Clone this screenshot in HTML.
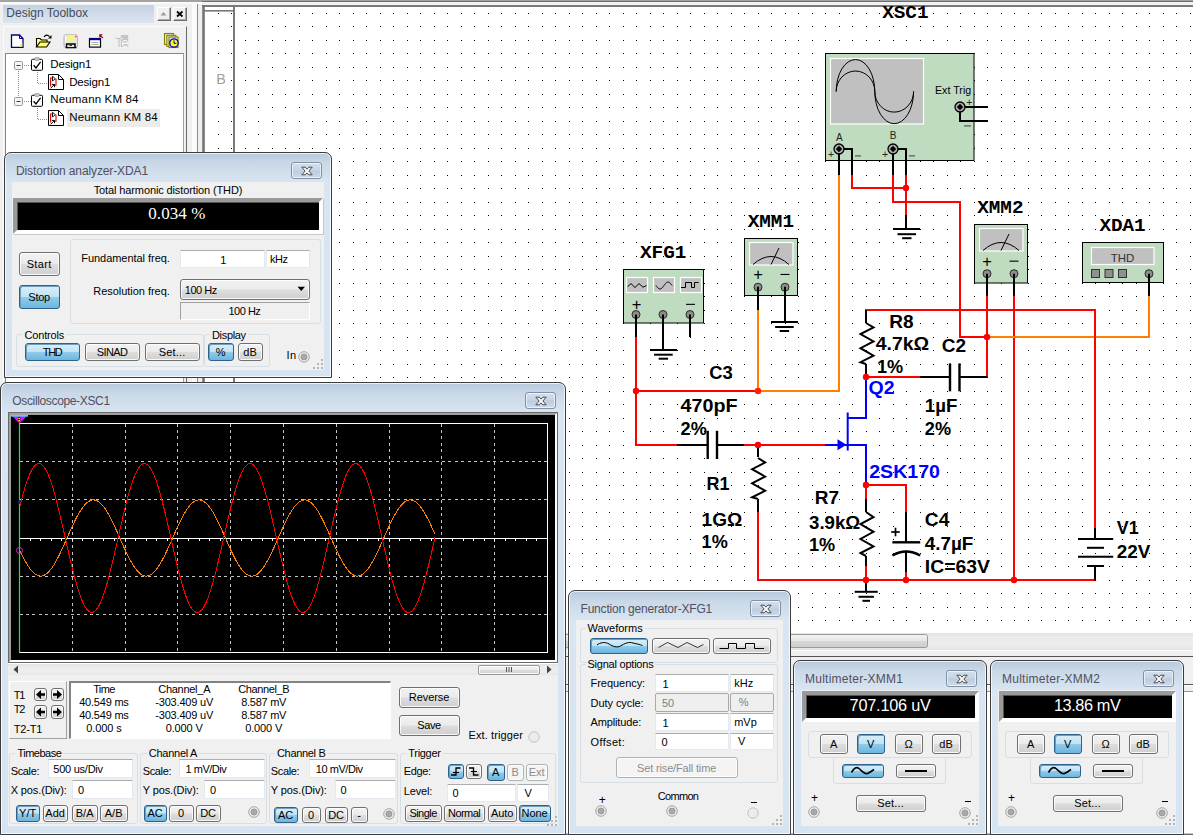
<!DOCTYPE html>
<html><head><meta charset="utf-8"><title>Multisim</title><style>
html,body{margin:0;padding:0;}
body{width:1193px;height:835px;overflow:hidden;position:relative;background:#fff;font-family:"Liberation Sans",sans-serif;font-size:11px;color:#000;}
div,svg{position:absolute;box-sizing:border-box;}
.abs{position:absolute;}
.t{white-space:nowrap;line-height:1;}
.t span{position:static;}
.w{border:1px solid #3c3c3c;border-radius:7px 7px 0 0;background:linear-gradient(#b8c9dc 0px,#c9d8e8 10px,#d9e5f2 30px,#d6e3f1 100%);box-shadow:inset 0 0 0 1px rgba(255,255,255,.75);}
.wc{background:#f0f0f0;}
.cl{border:1px solid #8290a5;border-radius:3px;background:linear-gradient(#d3dfec,#c6d4e5 48%,#bccbdf 52%,#cfdbea);box-shadow:inset 0 0 0 1px rgba(255,255,255,.6);}
.b{border:1px solid #707070;border-radius:3px;background:linear-gradient(#f2f2f2,#ebebeb 48%,#dddddd 52%,#cfcfcf);box-shadow:inset 0 0 0 1px rgba(255,255,255,.85);}
.ba{border-color:#2c628b;background:linear-gradient(#daeef9,#bfe3f6 48%,#8fcbeb 52%,#6db6dd);box-shadow:inset 1px 1px 0 0 #6f9fbd;}
.bd{border-color:#adb2b5;background:#f4f4f4;box-shadow:inset 0 0 0 1px #fcfcfc;}
.in{background:#fff;border:1px solid #e3e9ef;border-top-color:#abadb3;border-radius:1px;}
.ind{background:#efefef;border:1px solid #a9a9a9;border-radius:2px;}
.g{border:1px solid #d5dfe5;border-radius:3px;}
.sunk{border:1px solid #fff;border-top-color:#a0a0a0;border-left-color:#a0a0a0;}
</style></head><body>
<svg class="abs" style="left:0;top:0" width="1193" height="835" viewBox="0 0 1193 835"><rect x="0" y="0" width="1193" height="835" fill="#fff"/>
<defs><pattern id="dots" x="0" y="0" width="27" height="27" patternUnits="userSpaceOnUse"><rect x="2" y="13" width="1" height="1" fill="#000"/><rect x="15" y="13" width="1" height="1" fill="#000"/><rect x="2" y="26" width="1" height="1" fill="#000"/><rect x="15" y="26" width="1" height="1" fill="#000"/></pattern></defs>
<rect x="205" y="7" width="988" height="626" fill="url(#dots)"/>
<rect x="202" y="5" width="1000" height="2" fill="#7a7a7a"/>
<rect x="202.2" y="5" width="2.6" height="640" fill="#747474"/>
<rect x="233" y="7" width="2" height="640" fill="#7a7a7a"/>
<rect x="204" y="10" width="30" height="1.6" fill="#7a7a7a"/>
<text x="216.2" y="83.7" font-family="Liberation Sans, sans-serif" font-size="14.3" font-weight="normal" fill="#a2a2a2" text-anchor="start">B</text>
<text x="882.2" y="18.4" font-family="Liberation Mono, monospace" font-size="19.2" font-weight="bold" fill="#000" text-anchor="start" textLength="46.3" lengthAdjust="spacingAndGlyphs">XSC1</text>
<rect x="825.5" y="53.5" width="148.5" height="107" fill="#c0dcc0" stroke="#000" stroke-width="1"/>
<rect x="830.5" y="58.5" width="93" height="65.5" fill="#c0c0c0" stroke="#fff" stroke-width="1.2"/>
<path d="M836.2 91.5 A19.30 32 0 0 1 874.8 91.5 A19.30 32 0 0 0 913.6 91.5" fill="none" stroke="#000" stroke-width="1"/>
<path d="M836.2 91.5 A19.30 20.5 0 0 1 874.8 91.5 A19.30 20.5 0 0 0 913.6 91.5" fill="none" stroke="#000" stroke-width="1"/>
<text x="935.0" y="93.8" font-family="Liberation Sans, sans-serif" font-size="10.5" font-weight="normal" fill="#000" text-anchor="start" textLength="36.2" lengthAdjust="spacingAndGlyphs">Ext Trig</text>
<text x="969.2" y="106.0" font-family="Liberation Sans, sans-serif" font-size="10.5" font-weight="normal" fill="#222" text-anchor="middle">+</text>
<rect x="964" y="125.3" width="7" height="1.2" fill="#555"/>
<text x="839.3" y="140.5" font-family="Liberation Sans, sans-serif" font-size="10" font-weight="normal" fill="#222" text-anchor="middle">A</text>
<text x="893.2" y="139.0" font-family="Liberation Sans, sans-serif" font-size="10" font-weight="normal" fill="#222" text-anchor="middle">B</text>
<text x="831.0" y="158.3" font-family="Liberation Sans, sans-serif" font-size="10.5" font-weight="normal" fill="#222" text-anchor="middle">+</text>
<text x="885.0" y="158.3" font-family="Liberation Sans, sans-serif" font-size="10.5" font-weight="normal" fill="#222" text-anchor="middle">+</text>
<rect x="855" y="155.3" width="6" height="1.2" fill="#555"/>
<rect x="909" y="155.3" width="6" height="1.2" fill="#555"/>
<path d="M960.0 107.0 L988.0 107.0" fill="none" stroke="#000" stroke-width="2" stroke-linecap="butt" stroke-linejoin="miter"/>
<path d="M960.0 107.0 L960.0 121.0 L988.0 121.0" fill="none" stroke="#000" stroke-width="2" stroke-linecap="butt" stroke-linejoin="miter"/>
<path d="M839.0 149.0 L839.0 175.0" fill="none" stroke="#000" stroke-width="2" stroke-linecap="butt" stroke-linejoin="miter"/>
<path d="M839.0 149.0 L852.0 149.0 L852.0 175.0" fill="none" stroke="#000" stroke-width="2" stroke-linecap="butt" stroke-linejoin="miter"/>
<path d="M893.0 149.0 L893.0 175.0" fill="none" stroke="#000" stroke-width="2" stroke-linecap="butt" stroke-linejoin="miter"/>
<path d="M893.0 149.0 L906.0 149.0 L906.0 175.0" fill="none" stroke="#000" stroke-width="2" stroke-linecap="butt" stroke-linejoin="miter"/>
<circle cx="960" cy="107" r="5" fill="#adadad" stroke="#000" stroke-width="1.3"/><path d="M956.8 107 L960 103.8 L963.2 107 L960 110.2 Z" fill="#000"/>
<circle cx="839" cy="149" r="5" fill="#adadad" stroke="#000" stroke-width="1.3"/><path d="M835.8 149 L839 145.8 L842.2 149 L839 152.2 Z" fill="#000"/>
<circle cx="893" cy="149" r="5" fill="#adadad" stroke="#000" stroke-width="1.3"/><path d="M889.8 149 L893 145.8 L896.2 149 L893 152.2 Z" fill="#000"/>
<path d="M839.0 175.0 L839.0 391.0 L758.0 391.0" fill="none" stroke="#ff8000" stroke-width="2" stroke-linecap="butt" stroke-linejoin="miter"/>
<path d="M852.0 175.0 L852.0 188.0 L906.0 188.0" fill="none" stroke="#ff0000" stroke-width="2" stroke-linecap="butt" stroke-linejoin="miter"/>
<path d="M893.0 175.0 L893.0 202.0 L960.0 202.0 L960.0 337.0 L987.0 337.0" fill="none" stroke="#ff0000" stroke-width="2" stroke-linecap="butt" stroke-linejoin="miter"/>
<path d="M906.0 175.0 L906.0 215.0" fill="none" stroke="#ff0000" stroke-width="2" stroke-linecap="butt" stroke-linejoin="miter"/>
<path d="M906.0 215.0 L906.0 229.0" fill="none" stroke="#000" stroke-width="2" stroke-linecap="butt" stroke-linejoin="miter"/>
<path d="M893.0 229.0 L920.0 229.0" fill="none" stroke="#000" stroke-width="2" stroke-linecap="butt" stroke-linejoin="miter"/>
<path d="M897.5 234.2 L916.1 234.2" fill="none" stroke="#000" stroke-width="2" stroke-linecap="butt" stroke-linejoin="miter"/>
<path d="M902.1 238.2 L911.5 238.2" fill="none" stroke="#000" stroke-width="2" stroke-linecap="butt" stroke-linejoin="miter"/>
<text x="640.0" y="258.4" font-family="Liberation Mono, monospace" font-size="19.2" font-weight="bold" fill="#000" text-anchor="start" textLength="46.3" lengthAdjust="spacingAndGlyphs">XFG1</text>
<rect x="623.5" y="269.5" width="80" height="53.5" fill="#c0dcc0" stroke="#000" stroke-width="1"/>
<rect x="626.5" y="277.5" width="21" height="15" fill="#c0c0c0" stroke="#fff" stroke-width="1.2"/>
<rect x="653.5" y="277.5" width="21" height="15" fill="#c0c0c0" stroke="#fff" stroke-width="1.2"/>
<rect x="680.5" y="277.5" width="21" height="15" fill="#c0c0c0" stroke="#fff" stroke-width="1.2"/>
<path d="M627.5 286.8 L631.0 283.6 L635.0 287.5 L639.0 283.6 L643.0 287.2 L646.5 285.6" fill="none" stroke="#000" stroke-width="1" stroke-linecap="butt" stroke-linejoin="miter"/>
<path d="M656.0 285.5 L656.8 286.6 L657.6 287.6 L658.4 288.3 L659.2 288.8 L660.0 289.0 L660.8 288.8 L661.6 288.3 L662.4 287.6 L663.2 286.6 L664.0 285.5 L664.8 284.4 L665.6 283.4 L666.4 282.7 L667.2 282.2 L668.0 282.0 L668.8 282.2 L669.6 282.7 L670.4 283.4 L671.2 284.4 L672.0 285.5" fill="none" stroke="#000" stroke-width="1" stroke-linecap="butt" stroke-linejoin="miter"/>
<path d="M681.0 287.5 L685.5 287.5 L685.5 282.5 L691.5 282.5 L691.5 287.5 L694.5 287.5 L694.5 282.5 L698.6 282.5" fill="none" stroke="#000" stroke-width="1" stroke-linecap="butt" stroke-linejoin="miter"/>
<text x="636.5" y="310.3" font-family="Liberation Sans, sans-serif" font-size="16.5" font-weight="normal" fill="#000" text-anchor="middle">+</text>
<rect x="686" y="303.8" width="9" height="1.1" fill="#000"/>
<circle cx="636.0" cy="314.5" r="4" fill="#8c8c8c" stroke="#2a2a2a" stroke-width="1"/>
<circle cx="663.0" cy="314.5" r="4" fill="#8c8c8c" stroke="#2a2a2a" stroke-width="1"/>
<circle cx="690.0" cy="314.5" r="4" fill="#8c8c8c" stroke="#2a2a2a" stroke-width="1"/>
<path d="M636.0 314.5 L636.0 337.0" fill="none" stroke="#000" stroke-width="2" stroke-linecap="butt" stroke-linejoin="miter"/>
<path d="M663.0 314.5 L663.0 350.0" fill="none" stroke="#000" stroke-width="2" stroke-linecap="butt" stroke-linejoin="miter"/>
<path d="M690.0 314.5 L690.0 337.0" fill="none" stroke="#000" stroke-width="2" stroke-linecap="butt" stroke-linejoin="miter"/>
<path d="M650.0 350.0 L677.0 350.0" fill="none" stroke="#000" stroke-width="2" stroke-linecap="butt" stroke-linejoin="miter"/>
<path d="M654.1 354.7 L672.7 354.7" fill="none" stroke="#000" stroke-width="2" stroke-linecap="butt" stroke-linejoin="miter"/>
<path d="M658.7 358.7 L668.1 358.7" fill="none" stroke="#000" stroke-width="2" stroke-linecap="butt" stroke-linejoin="miter"/>
<path d="M636.0 337.0 L636.0 445.0 L677.0 445.0" fill="none" stroke="#ff0000" stroke-width="2" stroke-linecap="butt" stroke-linejoin="miter"/>
<path d="M636.0 391.0 L758.0 391.0" fill="none" stroke="#ff0000" stroke-width="2" stroke-linecap="butt" stroke-linejoin="miter"/>
<text x="747.7" y="226.5" font-family="Liberation Mono, monospace" font-size="19.2" font-weight="bold" fill="#000" text-anchor="start" textLength="46.3" lengthAdjust="spacingAndGlyphs">XMM1</text>
<rect x="744.5" y="238.5" width="53" height="57" fill="#c0dcc0" stroke="#000" stroke-width="1"/>
<rect x="749.5" y="242.5" width="43.5" height="22.5" fill="#c0c0c0" stroke="#fff" stroke-width="1.2"/>
<path d="M753.0 264.5 Q771.0 248.5 789.0 264.5" fill="none" stroke="#000" stroke-width="1"/>
<path d="M771.0 264.5 L779.0 248.0" fill="none" stroke="#000" stroke-width="1" stroke-linecap="butt" stroke-linejoin="miter"/>
<text x="758.0" y="280.4" font-family="Liberation Sans, sans-serif" font-size="16.5" font-weight="normal" fill="#000" text-anchor="middle">+</text>
<rect x="780.5" y="273.9" width="9" height="1.1" fill="#000"/>
<circle cx="758.0" cy="287.2" r="4" fill="#8c8c8c" stroke="#2a2a2a" stroke-width="1"/>
<circle cx="785.0" cy="287.2" r="4" fill="#8c8c8c" stroke="#2a2a2a" stroke-width="1"/>
<path d="M758.0 286.8 L758.0 310.0" fill="none" stroke="#000" stroke-width="2" stroke-linecap="butt" stroke-linejoin="miter"/>
<path d="M785.0 286.8 L785.0 322.0" fill="none" stroke="#000" stroke-width="2" stroke-linecap="butt" stroke-linejoin="miter"/>
<path d="M771.0 322.0 L798.0 322.0" fill="none" stroke="#000" stroke-width="2" stroke-linecap="butt" stroke-linejoin="miter"/>
<path d="M775.1 327.0 L793.7 327.0" fill="none" stroke="#000" stroke-width="2" stroke-linecap="butt" stroke-linejoin="miter"/>
<path d="M779.7 331.0 L789.1 331.0" fill="none" stroke="#000" stroke-width="2" stroke-linecap="butt" stroke-linejoin="miter"/>
<path d="M758.0 310.0 L758.0 391.0" fill="none" stroke="#ff8000" stroke-width="2" stroke-linecap="butt" stroke-linejoin="miter"/>
<text x="977.2" y="213.0" font-family="Liberation Mono, monospace" font-size="19.2" font-weight="bold" fill="#000" text-anchor="start" textLength="46.3" lengthAdjust="spacingAndGlyphs">XMM2</text>
<rect x="974.5" y="224.5" width="53" height="58.5" fill="#c0dcc0" stroke="#000" stroke-width="1"/>
<rect x="979.5" y="228.5" width="43.5" height="22.5" fill="#c0c0c0" stroke="#fff" stroke-width="1.2"/>
<path d="M983.0 250.5 Q1001.0 234.5 1019.0 250.5" fill="none" stroke="#000" stroke-width="1"/>
<path d="M1001.0 250.5 L1009.0 234.0" fill="none" stroke="#000" stroke-width="1" stroke-linecap="butt" stroke-linejoin="miter"/>
<text x="987.0" y="267.1" font-family="Liberation Sans, sans-serif" font-size="16.5" font-weight="normal" fill="#000" text-anchor="middle">+</text>
<rect x="1009.5" y="260.59999999999997" width="9" height="1.1" fill="#000"/>
<circle cx="987.0" cy="273.7" r="4" fill="#8c8c8c" stroke="#2a2a2a" stroke-width="1"/>
<circle cx="1014.0" cy="273.7" r="4" fill="#8c8c8c" stroke="#2a2a2a" stroke-width="1"/>
<path d="M987.0 273.7 L987.0 296.0" fill="none" stroke="#000" stroke-width="2" stroke-linecap="butt" stroke-linejoin="miter"/>
<path d="M1014.0 273.7 L1014.0 296.0" fill="none" stroke="#000" stroke-width="2" stroke-linecap="butt" stroke-linejoin="miter"/>
<path d="M987.0 296.0 L987.0 377.0" fill="none" stroke="#ff0000" stroke-width="2" stroke-linecap="butt" stroke-linejoin="miter"/>
<path d="M1014.0 296.0 L1014.0 580.0" fill="none" stroke="#ff0000" stroke-width="2" stroke-linecap="butt" stroke-linejoin="miter"/>
<text x="1099.4" y="231.1" font-family="Liberation Mono, monospace" font-size="19.2" font-weight="bold" fill="#000" text-anchor="start" textLength="46.3" lengthAdjust="spacingAndGlyphs">XDA1</text>
<rect x="1082.5" y="242.5" width="81" height="40" fill="#c0dcc0" stroke="#000" stroke-width="1"/>
<rect x="1091.5" y="247.5" width="62.5" height="17" fill="#c0c0c0" stroke="#fff" stroke-width="1.2"/>
<text x="1122.5" y="261.5" font-family="Liberation Sans, sans-serif" font-size="11.5" font-weight="normal" fill="#333" text-anchor="middle">THD</text>
<rect x="1091.5" y="269.5" width="8" height="8" fill="#909090" stroke="#333" stroke-width="1"/>
<rect x="1105" y="269.5" width="8" height="8" fill="#909090" stroke="#333" stroke-width="1"/>
<rect x="1118.5" y="269.5" width="8" height="8" fill="#909090" stroke="#333" stroke-width="1"/>
<circle cx="1149.0" cy="273.7" r="4" fill="#8c8c8c" stroke="#2a2a2a" stroke-width="1"/>
<path d="M1149.0 273.7 L1149.0 296.0" fill="none" stroke="#000" stroke-width="2" stroke-linecap="butt" stroke-linejoin="miter"/>
<path d="M1149.0 296.0 L1149.0 337.0 L987.0 337.0" fill="none" stroke="#ff8000" stroke-width="2" stroke-linecap="butt" stroke-linejoin="miter"/>
<path d="M866.0 323.0 L866.0 310.0 L1095.0 310.0 L1095.0 527.4" fill="none" stroke="#ff0000" stroke-width="2" stroke-linecap="butt" stroke-linejoin="miter"/>
<path d="M866.0 310.0 L866.0 323.0" fill="none" stroke="#000" stroke-width="2" stroke-linecap="butt" stroke-linejoin="miter"/>
<path d="M866.0 323.0 L873.5 327.4 L860.5 334.1 L873.5 341.5 L860.5 348.2 L873.5 355.6 L860.5 362.2 L866.0 364.0" fill="none" stroke="#000" stroke-width="2" stroke-linecap="butt" stroke-linejoin="miter"/>
<path d="M866.0 364.0 L866.0 377.0" fill="none" stroke="#000" stroke-width="2" stroke-linecap="butt" stroke-linejoin="miter"/>
<path d="M866.0 377.0 L920.0 377.0" fill="none" stroke="#ff0000" stroke-width="2" stroke-linecap="butt" stroke-linejoin="miter"/>
<text x="889.2" y="328.0" font-family="Liberation Sans, sans-serif" font-size="19" font-weight="bold" fill="#000" text-anchor="start" textLength="24.3" lengthAdjust="spacingAndGlyphs">R8</text>
<text x="875.7" y="350.4" font-family="Liberation Sans, sans-serif" font-size="19" font-weight="bold" fill="#000" text-anchor="start" textLength="53.5" lengthAdjust="spacingAndGlyphs">4.7k&#937;</text>
<text x="877.0" y="372.9" font-family="Liberation Sans, sans-serif" font-size="19" font-weight="bold" fill="#000" text-anchor="start" textLength="26.2" lengthAdjust="spacingAndGlyphs">1%</text>
<path d="M920.0 377.0 L950.0 377.0" fill="none" stroke="#000" stroke-width="2" stroke-linecap="butt" stroke-linejoin="miter"/>
<path d="M960.0 377.0 L987.0 377.0" fill="none" stroke="#000" stroke-width="2" stroke-linecap="butt" stroke-linejoin="miter"/>
<path d="M950.0 363.4 L950.0 391.3" fill="none" stroke="#000" stroke-width="2.4" stroke-linecap="butt" stroke-linejoin="miter"/>
<path d="M959.5 363.4 L959.5 391.3" fill="none" stroke="#000" stroke-width="2.4" stroke-linecap="butt" stroke-linejoin="miter"/>
<text x="941.8" y="351.9" font-family="Liberation Sans, sans-serif" font-size="19" font-weight="bold" fill="#000" text-anchor="start" textLength="24.3" lengthAdjust="spacingAndGlyphs">C2</text>
<text x="924.8" y="412.4" font-family="Liberation Sans, sans-serif" font-size="19" font-weight="bold" fill="#000" text-anchor="start" textLength="32.5" lengthAdjust="spacingAndGlyphs">1&#181;F</text>
<text x="924.8" y="434.6" font-family="Liberation Sans, sans-serif" font-size="19" font-weight="bold" fill="#000" text-anchor="start" textLength="26.2" lengthAdjust="spacingAndGlyphs">2%</text>
<text x="868.5" y="394.1" font-family="Liberation Sans, sans-serif" font-size="19" font-weight="bold" fill="#0000ff" text-anchor="start" textLength="26.0" lengthAdjust="spacingAndGlyphs">Q2</text>
<text x="869.2" y="478.0" font-family="Liberation Sans, sans-serif" font-size="19" font-weight="bold" fill="#0000ff" text-anchor="start" textLength="70.8" lengthAdjust="spacingAndGlyphs">2SK170</text>
<path d="M866.0 377.0 L866.0 418.0 L847.7 418.0" fill="none" stroke="#0000ff" stroke-width="2" stroke-linecap="butt" stroke-linejoin="miter"/>
<path d="M847.7 412.5 L847.7 450.5" fill="none" stroke="#0000ff" stroke-width="2" stroke-linecap="butt" stroke-linejoin="miter"/>
<path d="M847.7 445.0 L866.0 445.0 L866.0 485.0" fill="none" stroke="#0000ff" stroke-width="2" stroke-linecap="butt" stroke-linejoin="miter"/>
<path d="M825.0 445.0 L847.7 445.0" fill="none" stroke="#0000ff" stroke-width="2" stroke-linecap="butt" stroke-linejoin="miter"/>
<path d="M837.5 439.2 L846.5 444.7 L837.5 450.2 Z" fill="#0000ff"/>
<path d="M677.0 445.0 L707.7 445.0" fill="none" stroke="#000" stroke-width="2" stroke-linecap="butt" stroke-linejoin="miter"/>
<path d="M717.0 445.0 L744.0 445.0" fill="none" stroke="#000" stroke-width="2" stroke-linecap="butt" stroke-linejoin="miter"/>
<path d="M707.7 430.8 L707.7 459.0" fill="none" stroke="#000" stroke-width="2.4" stroke-linecap="butt" stroke-linejoin="miter"/>
<path d="M717.0 430.8 L717.0 459.0" fill="none" stroke="#000" stroke-width="2.4" stroke-linecap="butt" stroke-linejoin="miter"/>
<path d="M744.0 445.0 L825.0 445.0" fill="none" stroke="#ff0000" stroke-width="2" stroke-linecap="butt" stroke-linejoin="miter"/>
<text x="709.2" y="378.6" font-family="Liberation Sans, sans-serif" font-size="19" font-weight="bold" fill="#000" text-anchor="start" textLength="23.5" lengthAdjust="spacingAndGlyphs">C3</text>
<text x="680.6" y="412.0" font-family="Liberation Sans, sans-serif" font-size="19" font-weight="bold" fill="#000" text-anchor="start" textLength="57.0" lengthAdjust="spacingAndGlyphs">470pF</text>
<text x="680.6" y="434.7" font-family="Liberation Sans, sans-serif" font-size="19" font-weight="bold" fill="#000" text-anchor="start" textLength="26.2" lengthAdjust="spacingAndGlyphs">2%</text>
<path d="M758.0 445.0 L758.0 457.0" fill="none" stroke="#000" stroke-width="2" stroke-linecap="butt" stroke-linejoin="miter"/>
<path d="M758.0 458.0 L765.1 462.5 L752.1 469.2 L765.1 476.6 L752.1 483.3 L765.1 490.7 L752.1 497.3 L758.0 499.0" fill="none" stroke="#000" stroke-width="2" stroke-linecap="butt" stroke-linejoin="miter"/>
<path d="M758.0 500.0 L758.0 512.0" fill="none" stroke="#000" stroke-width="2" stroke-linecap="butt" stroke-linejoin="miter"/>
<path d="M758.0 512.0 L758.0 580.0 L1095.0 580.0" fill="none" stroke="#ff0000" stroke-width="2" stroke-linecap="butt" stroke-linejoin="miter"/>
<text x="706.5" y="489.7" font-family="Liberation Sans, sans-serif" font-size="19" font-weight="bold" fill="#000" text-anchor="start" textLength="23.0" lengthAdjust="spacingAndGlyphs">R1</text>
<text x="701.6" y="526.2" font-family="Liberation Sans, sans-serif" font-size="19" font-weight="bold" fill="#000" text-anchor="start" textLength="40.7" lengthAdjust="spacingAndGlyphs">1G&#937;</text>
<text x="701.6" y="547.9" font-family="Liberation Sans, sans-serif" font-size="19" font-weight="bold" fill="#000" text-anchor="start" textLength="26.2" lengthAdjust="spacingAndGlyphs">1%</text>
<path d="M866.0 485.0 L866.0 499.0" fill="none" stroke="#ff0000" stroke-width="2" stroke-linecap="butt" stroke-linejoin="miter"/>
<path d="M866.0 499.0 L866.0 512.0" fill="none" stroke="#000" stroke-width="2" stroke-linecap="butt" stroke-linejoin="miter"/>
<path d="M866.0 512.0 L873.5 517.1 L860.5 524.1 L873.5 531.8 L860.5 539.0 L873.5 546.5 L860.5 553.0 L866.0 556.0" fill="none" stroke="#000" stroke-width="2" stroke-linecap="butt" stroke-linejoin="miter"/>
<path d="M866.0 556.0 L866.0 566.0" fill="none" stroke="#000" stroke-width="2" stroke-linecap="butt" stroke-linejoin="miter"/>
<path d="M866.0 566.0 L866.0 580.0" fill="none" stroke="#ff0000" stroke-width="2" stroke-linecap="butt" stroke-linejoin="miter"/>
<path d="M866.0 580.0 L866.0 591.8" fill="none" stroke="#000" stroke-width="2" stroke-linecap="butt" stroke-linejoin="miter"/>
<path d="M854.7 591.8 L877.7 591.8" fill="none" stroke="#000" stroke-width="2" stroke-linecap="butt" stroke-linejoin="miter"/>
<path d="M858.5 596.8 L873.9 596.8" fill="none" stroke="#000" stroke-width="2" stroke-linecap="butt" stroke-linejoin="miter"/>
<path d="M862.4 600.8 L870.0 600.8" fill="none" stroke="#000" stroke-width="2" stroke-linecap="butt" stroke-linejoin="miter"/>
<text x="814.8" y="503.6" font-family="Liberation Sans, sans-serif" font-size="19" font-weight="bold" fill="#000" text-anchor="start" textLength="24.3" lengthAdjust="spacingAndGlyphs">R7</text>
<text x="809.0" y="528.8" font-family="Liberation Sans, sans-serif" font-size="19" font-weight="bold" fill="#000" text-anchor="start" textLength="51.3" lengthAdjust="spacingAndGlyphs">3.9k&#937;</text>
<text x="809.0" y="551.1" font-family="Liberation Sans, sans-serif" font-size="19" font-weight="bold" fill="#000" text-anchor="start" textLength="26.2" lengthAdjust="spacingAndGlyphs">1%</text>
<path d="M866.0 485.0 L906.0 485.0 L906.0 512.0" fill="none" stroke="#ff0000" stroke-width="2" stroke-linecap="butt" stroke-linejoin="miter"/>
<path d="M906.0 512.0 L906.0 542.3" fill="none" stroke="#000" stroke-width="2" stroke-linecap="butt" stroke-linejoin="miter"/>
<path d="M892.4 542.3 L920.2 542.3" fill="none" stroke="#000" stroke-width="2.4" stroke-linecap="butt" stroke-linejoin="miter"/>
<path d="M892.4 555.5 Q906.1 547.5 920.2 555.5" fill="none" stroke="#000" stroke-width="2.4"/>
<path d="M906.0 551.7 L906.0 572.7" fill="none" stroke="#000" stroke-width="2" stroke-linecap="butt" stroke-linejoin="miter"/>
<path d="M906.0 572.7 L906.0 580.0" fill="none" stroke="#ff0000" stroke-width="2" stroke-linecap="butt" stroke-linejoin="miter"/>
<path d="M891.2 532.0 L899.8 532.0" fill="none" stroke="#000" stroke-width="1.7" stroke-linecap="butt" stroke-linejoin="miter"/>
<path d="M895.5 527.7 L895.5 536.3" fill="none" stroke="#000" stroke-width="1.7" stroke-linecap="butt" stroke-linejoin="miter"/>
<text x="924.8" y="526.3" font-family="Liberation Sans, sans-serif" font-size="19" font-weight="bold" fill="#000" text-anchor="start" textLength="24.5" lengthAdjust="spacingAndGlyphs">C4</text>
<text x="924.8" y="549.7" font-family="Liberation Sans, sans-serif" font-size="19" font-weight="bold" fill="#000" text-anchor="start" textLength="48.5" lengthAdjust="spacingAndGlyphs">4.7&#181;F</text>
<text x="924.8" y="572.7" font-family="Liberation Sans, sans-serif" font-size="19" font-weight="bold" fill="#000" text-anchor="start" textLength="65.2" lengthAdjust="spacingAndGlyphs">IC=63V</text>
<path d="M1095.0 527.4 L1095.0 539.0" fill="none" stroke="#000" stroke-width="2" stroke-linecap="butt" stroke-linejoin="miter"/>
<path d="M1078.0 539.0 L1113.2 539.0" fill="none" stroke="#000" stroke-width="2" stroke-linecap="butt" stroke-linejoin="miter"/>
<path d="M1087.0 547.8 L1104.0 547.8" fill="none" stroke="#000" stroke-width="2" stroke-linecap="butt" stroke-linejoin="miter"/>
<path d="M1078.0 556.8 L1113.2 556.8" fill="none" stroke="#000" stroke-width="2" stroke-linecap="butt" stroke-linejoin="miter"/>
<path d="M1087.0 566.0 L1104.0 566.0" fill="none" stroke="#000" stroke-width="2" stroke-linecap="butt" stroke-linejoin="miter"/>
<path d="M1095.0 566.0 L1095.0 580.0" fill="none" stroke="#000" stroke-width="2" stroke-linecap="butt" stroke-linejoin="miter"/>
<text x="1116.8" y="533.7" font-family="Liberation Sans, sans-serif" font-size="19" font-weight="bold" fill="#000" text-anchor="start" textLength="21.8" lengthAdjust="spacingAndGlyphs">V1</text>
<text x="1116.8" y="557.9" font-family="Liberation Sans, sans-serif" font-size="19" font-weight="bold" fill="#000" text-anchor="start" textLength="33.6" lengthAdjust="spacingAndGlyphs">22V</text>
<circle cx="906.0" cy="188.0" r="3.2" fill="#ff0000"/>
<circle cx="636.0" cy="391.0" r="3.2" fill="#ff0000"/>
<circle cx="758.0" cy="391.0" r="3.2" fill="#ff2000"/>
<circle cx="987.0" cy="337.0" r="3.2" fill="#ff0000"/>
<circle cx="866.0" cy="377.0" r="3.2" fill="#ff0000"/>
<circle cx="758.0" cy="445.0" r="3.2" fill="#ff0000"/>
<circle cx="866.0" cy="485.0" r="3.2" fill="#ff0000"/>
<circle cx="866.0" cy="580.0" r="3.2" fill="#ff0000"/>
<circle cx="906.0" cy="580.0" r="3.2" fill="#ff0000"/>
<circle cx="1014.0" cy="580.0" r="3.2" fill="#ff0000"/>
<defs><linearGradient id="track" x1="0" y1="0" x2="0" y2="1"><stop offset="0" stop-color="#e3e3e3"/><stop offset="0.25" stop-color="#ececec"/><stop offset="0.75" stop-color="#ececec"/><stop offset="1" stop-color="#e3e3e3"/></linearGradient><linearGradient id="thumb" x1="0" y1="0" x2="0" y2="1"><stop offset="0" stop-color="#f3f3f3"/><stop offset="0.5" stop-color="#e6e6e6"/><stop offset="0.52" stop-color="#d6d6d6"/><stop offset="1" stop-color="#cfcfcf"/></linearGradient></defs>
<rect x="202" y="633" width="991" height="17" fill="url(#track)"/>
<rect x="560.5" y="634.5" width="367" height="13" rx="2" fill="url(#thumb)" stroke="#9a9a9a" stroke-width="1"/>
<rect x="192" y="650" width="1001" height="1" fill="#fff"/>
<rect x="192" y="651" width="1001" height="5" fill="#f0f0f0"/>
<rect x="192" y="656" width="1001" height="1" fill="#555"/>
<rect x="192" y="657" width="1001" height="27" fill="#f0f0f0"/>
<rect x="192" y="684" width="1001" height="1" fill="#555"/>
<rect x="192" y="685" width="1001" height="1" fill="#fff"/>
<rect x="192" y="686" width="1001" height="5" fill="#f0f0f0"/>
<rect x="192" y="691" width="1001" height="1" fill="#8a96a6"/>
<rect x="192" y="692" width="1001" height="143" fill="#fff"/>
<rect x="0" y="833.6" width="1193" height="1.4" fill="#6a6a6a"/></svg>
<div class="abs" style="left:0.00px;top:0.00px;width:192.00px;height:835.00px;background:#f0f0f0;"></div>
<div class="abs" style="left:192.00px;top:2.00px;width:5.00px;height:833.00px;background:#fbfbfb;"></div>
<div class="abs" style="left:197.00px;top:2.00px;width:1.40px;height:833.00px;background:#8c8c8c;"></div>
<div class="abs" style="left:198.40px;top:2.00px;width:3.60px;height:833.00px;background:#f0f0f0;"></div>
<div class="abs" style="left:0.00px;top:0.00px;width:1193.00px;height:1.70px;background:#a3a3a3;"></div>
<div class="abs" style="left:0.00px;top:1.70px;width:202.00px;height:2.00px;background:#fafafa;"></div>
<div class="abs" style="left:202.00px;top:1.20px;width:991.00px;height:1.00px;background:#6e6e6e;"></div>
<div class="abs" style="left:202.00px;top:2.20px;width:991.00px;height:2.80px;background:#f2f2f2;"></div>
<div class="abs" style="left:3.00px;top:5.00px;width:151.00px;height:18.00px;background:linear-gradient(#c3d2e3,#d3deeb 60%,#dbe4ef);"></div>
<div class="t" style="top:7px;font-size:12px;left:6.30px;color:#4a4a55;letter-spacing:-0.003px;">Design Toolbox</div>
<div class="abs" style="left:157.00px;top:7.00px;width:14.00px;height:14.00px;background:#f0f0f0;border:1px solid #fff;border-right-color:#6d6d6d;border-bottom-color:#6d6d6d;box-shadow:inset -1px -1px 0 #a8a8a8;"></div>
<svg class="abs" style="left:157px;top:7px" width="14" height="14" viewBox="0 0 14 14"><path d="M3.5 8.5 L6.5 5 L9.5 8.5 Z" fill="#9b9b9b"/></svg>
<div class="abs" style="left:173.00px;top:7.00px;width:14.00px;height:14.00px;background:#f0f0f0;border:1px solid #fff;border-right-color:#6d6d6d;border-bottom-color:#6d6d6d;box-shadow:inset -1px -1px 0 #a8a8a8;"></div>
<svg class="abs" style="left:173px;top:7px" width="14" height="14" viewBox="0 0 14 14"><path d="M4 4.500 L9.500 9.500 M9.500 4.500 L4 9.500" stroke="#000" stroke-width="1.7"/></svg>
<div class="abs" style="left:3.00px;top:26.00px;width:184.00px;height:810.00px;background:#f0f0f0;border:1px solid #fbfbfb;border-right-color:#6a6a6a;border-bottom:none;"></div>
<svg class="abs" style="left:0;top:0" width="192" height="60" viewBox="0 0 192 60"><path d="M11.5 35 H19.5 L23 38.5 V47.3 H11.5 Z" fill="#fff" stroke="#00008b" stroke-width="1.3"/><path d="M19.5 35 V38.5 H23" fill="none" stroke="#00008b" stroke-width="1"/><path d="M22.3 43 V46.6 H18.6 Z" fill="#ffff00"/><path d="M36.5 47 V38.5 H40 L41.5 40 H47 V42" fill="#ffff80" stroke="#000" stroke-width="1.1"/><path d="M36.5 47 L40 42 H50 L46.5 47 Z" fill="#ffff60" stroke="#000" stroke-width="1.1"/><path d="M44 37 Q46.5 33.5 49.5 36.5" fill="none" stroke="#000" stroke-width="1.1"/><path d="M48 38.5 L51.5 38.5 L51.5 35 Z" fill="#000"/><rect x="64" y="34.8" width="13.4" height="12.6" rx="1.5" fill="#e6e6e6" stroke="#b4b4b4" stroke-width="1"/><rect x="65" y="35.6" width="1.2" height="11" fill="#fff"/><rect x="67" y="35" width="7.6" height="6.6" fill="#f2f29a"/><path d="M67.500 36 L72 41 M70 35.200 L74.300 40 M67.200 38.500 L69.800 41.400" stroke="#ffff30" stroke-width="0.9"/><rect x="75.300" y="36" width="1.2" height="1.2" fill="#f00"/><path d="M66.500 47.500 V44 H75 V47.500" fill="none" stroke="#000" stroke-width="1.5"/><rect x="69.500" y="44" width="2.500" height="2" fill="#333"/><path d="M65.500 47.700 H76.500" stroke="#000" stroke-width="1.2"/><rect x="89.5" y="38.5" width="11" height="8.6" fill="#fff" stroke="#000" stroke-width="1.2"/><rect x="89" y="38" width="12" height="2.2" fill="#00008b"/><path d="M91.5 42.5 H98.5 M91.5 44.5 H98.5" stroke="#999" stroke-width="0.8"/><path d="M103 38.200 L99.800 34.800 M99.800 37.400 V34.800 H102.300" stroke="#8b0000" stroke-width="1.1" fill="none"/><rect x="120.8" y="35" width="7.4" height="12" fill="#c6c6c6"/><rect x="164.5" y="33.5" width="9" height="11" fill="#ececd8" stroke="#808000" stroke-width="1.1"/><rect x="166.8" y="35.3" width="9" height="11" fill="#ececd8" stroke="#808000" stroke-width="1.1"/><rect x="169" y="37" width="9" height="10.5" fill="#ececd8" stroke="#808000" stroke-width="1.1"/><circle cx="174" cy="43" r="4.2" fill="#ffff00" stroke="#0000d0" stroke-width="1.3"/><path d="M174 40.3 V43.3 H176.4" fill="none" stroke="#0000d0" stroke-width="1"/></svg>
<div class="t" style="top:37px;font-size:12.5px;left:115.30px;background:linear-gradient(90deg,#c2c2c2 0,#c2c2c2 45%,#fff 45%);-webkit-background-clip:text;background-clip:text;color:transparent;">Te</div>
<div class="abs" style="left:5.00px;top:53.00px;width:179.00px;height:360.00px;background:#fff;border:1px solid #828790;border-right-color:#9aa0a8;"></div>
<svg class="abs" style="left:0;top:0" width="192" height="160" viewBox="0 0 192 160"><rect x="14.5" y="61.5" width="8" height="8" rx="1" fill="#f4f4f4" stroke="#969696" stroke-width="1"/><path d="M16.5 65.5 H20.5" stroke="#2a3a9a" stroke-width="1"/><rect x="14.5" y="97.5" width="8" height="8" rx="1" fill="#f4f4f4" stroke="#969696" stroke-width="1"/><path d="M16.5 101.5 H20.5" stroke="#2a3a9a" stroke-width="1"/><path d="M24 65.5 H31" stroke="#909090" stroke-width="1" stroke-dasharray="1 1" fill="none"/><path d="M24 101.5 H31" stroke="#909090" stroke-width="1" stroke-dasharray="1 1" fill="none"/><path d="M18.5 71 V97" stroke="#909090" stroke-width="1" stroke-dasharray="1 1" fill="none"/><path d="M37.5 72 V83.5 H48" stroke="#909090" stroke-width="1" stroke-dasharray="1 1" fill="none"/><path d="M37.5 108 V119.5 H48" stroke="#909090" stroke-width="1" stroke-dasharray="1 1" fill="none"/><rect x="31.5" y="59.3" width="11" height="11" rx="1" fill="#fff" stroke="#000" stroke-width="1"/><rect x="34.5" y="57.8" width="5" height="2.4" rx="1" fill="#ddd" stroke="#777" stroke-width="0.8"/><path d="M33.6 65.3 L36 67.89999999999999 L40.6 61.9" fill="none" stroke="#000" stroke-width="1.3"/><rect x="31.5" y="95.3" width="11" height="11" rx="1" fill="#fff" stroke="#000" stroke-width="1"/><rect x="34.5" y="93.8" width="5" height="2.4" rx="1" fill="#ddd" stroke="#777" stroke-width="0.8"/><path d="M33.6 101.3 L36 103.89999999999999 L40.6 97.89999999999999" fill="none" stroke="#000" stroke-width="1.3"/><path d="M48.5 74.5 H58.5 L63.5 79.5 V89.5 H48.5 Z" fill="#fff" stroke="#000" stroke-width="1"/><path d="M58.5 74.5 V79.5 H63.5" fill="none" stroke="#000" stroke-width="1"/><path d="M50.6 78 H52.5 M50.6 77.5 V86.5 M56 78.8 V85.3 H53.5" stroke="#e00000" stroke-width="1.1" fill="none"/><path d="M52.5 76.3 L55.4 78.7 L52.5 81 Z" fill="#fff" stroke="#000" stroke-width="0.9"/><path d="M50.6 88.3 L54.3 84.6 M51.8 84.4 L54.5 84.4 L54.5 87.2" stroke="#000" stroke-width="1" fill="none"/><path d="M48.5 110.5 H58.5 L63.5 115.5 V125.5 H48.5 Z" fill="#fff" stroke="#000" stroke-width="1"/><path d="M58.5 110.5 V115.5 H63.5" fill="none" stroke="#000" stroke-width="1"/><path d="M50.6 114 H52.5 M50.6 113.5 V122.5 M56 114.8 V121.3 H53.5" stroke="#e00000" stroke-width="1.1" fill="none"/><path d="M52.5 112.3 L55.4 114.7 L52.5 117 Z" fill="#fff" stroke="#000" stroke-width="0.9"/><path d="M50.6 124.3 L54.3 120.6 M51.8 120.4 L54.5 120.4 L54.5 123.2" stroke="#000" stroke-width="1" fill="none"/></svg>
<div class="abs" style="left:67.00px;top:109.00px;width:93.00px;height:18.00px;background:#ececec;"></div>
<div class="t" style="top:59px;font-size:11.5px;left:50.30px;color:#000;letter-spacing:-0.172px;">Design1</div>
<div class="t" style="top:77px;font-size:11.5px;left:69.20px;letter-spacing:-0.172px;">Design1</div>
<div class="t" style="top:94px;font-size:11.5px;left:50.30px;letter-spacing:0.154px;">Neumann KM 84</div>
<div class="t" style="top:112px;font-size:11.5px;left:69.20px;letter-spacing:0.176px;">Neumann KM 84</div>
<div class="w" style="left:4.00px;top:152.00px;width:328.00px;height:226.00px;"></div>
<div class="wc" style="left:12.00px;top:182.00px;width:312.00px;height:188.00px;"></div>
<div class="t" style="top:165px;font-size:12px;left:16.00px;color:#505060;letter-spacing:-0.113px;">Distortion analyzer-XDA1</div>
<div class="cl" style="left:291.00px;top:162.00px;width:31.00px;height:17.00px;"></div>
<svg class="abs" style="left:300.5px;top:165.5px" width="12" height="10" viewBox="0 0 12 10"><path d="M0.8 1.2 H4.2 L6 3.1 L7.8 1.2 H11.2 L7.9 5 L11.2 8.800 H7.8 L6 6.9 L4.2 8.800 H0.8 L4.1 5 Z" fill="#f6f6f6" stroke="#4a4a4a" stroke-width="1" stroke-linejoin="round"/></svg>
<div class="t" style="top:185px;font-size:11px;left:-32.00px;width:400px;text-align:center;letter-spacing:-0.117px;">Total harmonic distortion (THD)</div>
<div class="abs" style="left:13.00px;top:198.00px;width:309.50px;height:36.00px;background:#000;border:4.5px solid #fff;border-top-color:#9a9a9a;border-left-color:#9a9a9a;box-shadow:inset 1px 1px 0 #555, 1px 1px 0 #c8c8c8;"></div>
<div class="t" style="top:205px;font-size:17px;left:-23.10px;width:400px;text-align:center;color:#fff;font-family:'Liberation Serif',serif;letter-spacing:0.105px;">0.034 %</div>
<div class="g" style="left:69.50px;top:239.00px;width:251.00px;height:84.50px;"></div>
<div class="b" style="left:19.00px;top:252.00px;width:41.00px;height:24.00px;"></div>
<div class="t" style="top:259px;font-size:11px;left:-160.90px;width:400px;text-align:center;letter-spacing:0.313px;">Start</div>
<div class="b ba" style="left:19.00px;top:285.00px;width:41.00px;height:24.00px;"></div>
<div class="t" style="top:292px;font-size:11px;left:-160.90px;width:400px;text-align:center;letter-spacing:-0.285px;">Stop</div>
<div class="t" style="top:253px;font-size:11px;left:81.30px;letter-spacing:-0.046px;">Fundamental freq.</div>
<div class="in" style="left:180.00px;top:250.00px;width:85.00px;height:18.00px;"></div>
<div class="t" style="top:255px;font-size:11px;left:23.40px;width:400px;text-align:center;">1</div>
<div class="in" style="left:266.00px;top:250.00px;width:44.00px;height:18.00px;"></div>
<div class="t" style="top:254px;font-size:11px;left:270.00px;letter-spacing:-0.484px;">kHz</div>
<div class="t" style="top:286px;font-size:11px;left:93.30px;letter-spacing:-0.034px;">Resolution freq.</div>
<div class="b" style="left:180.00px;top:279.00px;width:130.00px;height:21.00px;"></div>
<div class="t" style="top:285px;font-size:11px;left:184.80px;letter-spacing:-0.477px;">100 Hz</div>
<svg class="abs" style="left:297px;top:286px" width="9" height="6"><path d="M0.5 0.8 H8 L4.25 5 Z" fill="#000"/></svg>
<div class="abs" style="left:180.00px;top:302.00px;width:130.00px;height:18.00px;border:1px solid #fff;border-top-color:#a0a0a0;border-left-color:#a0a0a0;"></div>
<div class="t" style="top:306px;font-size:11px;left:44.40px;width:400px;text-align:center;letter-spacing:-0.477px;">100 Hz</div>
<div class="g" style="left:16.00px;top:334.00px;width:188.00px;height:33.00px;"></div>
<div class="abs" style="left:22.60px;top:333.00px;width:43.50px;height:3.00px;background:#f0f0f0;"></div>
<div class="t" style="top:330px;font-size:11px;left:24.60px;letter-spacing:-0.184px;">Controls</div>
<div class="b ba" style="left:25.00px;top:343.00px;width:55.00px;height:18.00px;"></div>
<div class="t" style="top:347px;font-size:11px;left:-147.90px;width:400px;text-align:center;letter-spacing:-1.271px;">THD</div>
<div class="b" style="left:85.00px;top:343.00px;width:55.00px;height:18.00px;"></div>
<div class="t" style="top:347px;font-size:11px;left:-87.90px;width:400px;text-align:center;letter-spacing:-0.625px;">SINAD</div>
<div class="b" style="left:145.00px;top:343.00px;width:55.00px;height:18.00px;"></div>
<div class="t" style="top:347px;font-size:11px;left:-27.90px;width:400px;text-align:center;letter-spacing:0.185px;">Set...</div>
<div class="g" style="left:204.00px;top:334.00px;width:66.00px;height:33.00px;"></div>
<div class="abs" style="left:210.00px;top:333.00px;width:37.80px;height:3.00px;background:#f0f0f0;"></div>
<div class="t" style="top:330px;font-size:11px;left:212.00px;letter-spacing:-0.325px;">Display</div>
<div class="b ba" style="left:208.00px;top:343.00px;width:26.00px;height:18.00px;"></div>
<div class="t" style="top:347px;font-size:11px;left:20.60px;width:400px;text-align:center;">%</div>
<div class="b" style="left:238.00px;top:343.00px;width:25.00px;height:18.00px;"></div>
<div class="t" style="top:347px;font-size:11px;left:50.10px;width:400px;text-align:center;">dB</div>
<div class="t" style="top:350px;font-size:11px;left:286.60px;letter-spacing:0.260px;">In</div>
<svg class="abs" style="left:296.9px;top:349.5px" width="14" height="14"><circle cx="7" cy="7" r="5.3" fill="#e8e8e8" stroke="#a8a8a8" stroke-width="1"/><circle cx="7" cy="7" r="3" fill="#a9a9a9" stroke="#929292" stroke-width="0.8"/></svg>
<svg class="abs" style="left:313px;top:359px" width="11" height="11"><rect x="8" y="0" width="2" height="2" fill="#b4b4b4"/><rect x="4" y="4" width="2" height="2" fill="#b4b4b4"/><rect x="8" y="4" width="2" height="2" fill="#b4b4b4"/><rect x="0" y="8" width="2" height="2" fill="#b4b4b4"/><rect x="4" y="8" width="2" height="2" fill="#b4b4b4"/><rect x="8" y="8" width="2" height="2" fill="#b4b4b4"/></svg>
<div class="w" style="left:0.00px;top:382.00px;width:566.00px;height:452.50px;"></div>
<div class="wc" style="left:8.00px;top:412.00px;width:550.00px;height:414.00px;"></div>
<div class="t" style="top:395px;font-size:12px;left:12.30px;color:#505060;letter-spacing:-0.351px;">Oscilloscope-XSC1</div>
<div class="cl" style="left:525.00px;top:392.00px;width:31.00px;height:17.00px;"></div>
<svg class="abs" style="left:534.5px;top:395.5px" width="12" height="10" viewBox="0 0 12 10"><path d="M0.8 1.2 H4.2 L6 3.1 L7.8 1.2 H11.2 L7.9 5 L11.2 8.800 H7.8 L6 6.9 L4.2 8.800 H0.8 L4.1 5 Z" fill="#f6f6f6" stroke="#4a4a4a" stroke-width="1" stroke-linejoin="round"/></svg>
<div class="abs" style="left:8.00px;top:412.00px;width:550.00px;height:251.00px;background:#696969;"></div>
<div class="abs" style="left:9.00px;top:413.00px;width:548.00px;height:249.00px;background:#000;border:2px solid #fff;border-top-color:#a0a0a0;border-left-color:#a0a0a0;"></div>
<svg class="abs" style="left:0;top:0" width="567" height="670" viewBox="0 0 567 670"><rect x="19.5" y="423.5" width="528.0" height="229.0" fill="none" stroke="#fff" stroke-width="1"/><path d="M72.5 423.5 V652.5" stroke="#c4c4c4" stroke-width="1" stroke-dasharray="3 3.4" shape-rendering="crispEdges"/><path d="M125.5 423.5 V652.5" stroke="#c4c4c4" stroke-width="1" stroke-dasharray="3 3.4" shape-rendering="crispEdges"/><path d="M177.5 423.5 V652.5" stroke="#c4c4c4" stroke-width="1" stroke-dasharray="3 3.4" shape-rendering="crispEdges"/><path d="M230.5 423.5 V652.5" stroke="#c4c4c4" stroke-width="1" stroke-dasharray="3 3.4" shape-rendering="crispEdges"/><path d="M283.5 423.5 V652.5" stroke="#c4c4c4" stroke-width="1" stroke-dasharray="3 3.4" shape-rendering="crispEdges"/><path d="M336.5 423.5 V652.5" stroke="#c4c4c4" stroke-width="1" stroke-dasharray="3 3.4" shape-rendering="crispEdges"/><path d="M389.5 423.5 V652.5" stroke="#c4c4c4" stroke-width="1" stroke-dasharray="3 3.4" shape-rendering="crispEdges"/><path d="M441.5 423.5 V652.5" stroke="#c4c4c4" stroke-width="1" stroke-dasharray="3 3.4" shape-rendering="crispEdges"/><path d="M494.5 423.5 V652.5" stroke="#c4c4c4" stroke-width="1" stroke-dasharray="3 3.4" shape-rendering="crispEdges"/><path d="M19.5 461.5 H547.5" stroke="#c4c4c4" stroke-width="1" stroke-dasharray="3 3.4" shape-rendering="crispEdges"/><path d="M19.5 499.5 H547.5" stroke="#c4c4c4" stroke-width="1" stroke-dasharray="3 3.4" shape-rendering="crispEdges"/><path d="M19.5 538.5 H547.5" stroke="#fff" stroke-width="1"/><path d="M29.56 540.0 H547.5" stroke="#fff" stroke-width="2" stroke-dasharray="1 9.560" shape-rendering="crispEdges"/><path d="M19.5 576.5 H547.5" stroke="#c4c4c4" stroke-width="1" stroke-dasharray="3 3.4" shape-rendering="crispEdges"/><path d="M19.5 614.5 H547.5" stroke="#c4c4c4" stroke-width="1" stroke-dasharray="3 3.4" shape-rendering="crispEdges"/><path d="M19.5 549.8 L21.0 553.0 L22.5 556.0 L24.0 558.9 L25.5 561.7 L27.0 564.3 L28.5 566.6 L30.0 568.7 L31.5 570.6 L33.0 572.3 L34.5 573.6 L36.0 574.7 L37.5 575.4 L39.0 575.9 L40.5 576.1 L42.0 576.0 L43.5 575.5 L45.0 574.8 L46.5 573.8 L48.0 572.5 L49.5 570.9 L51.0 569.1 L52.5 567.0 L54.0 564.7 L55.5 562.1 L57.0 559.4 L58.5 556.5 L60.0 553.5 L61.5 550.3 L63.0 547.0 L64.5 543.7 L66.0 540.3 L67.5 536.9 L69.0 533.5 L70.5 530.2 L72.0 526.9 L73.5 523.7 L75.0 520.6 L76.5 517.6 L78.0 514.8 L79.5 512.2 L81.0 509.8 L82.5 507.7 L84.0 505.7 L85.5 504.1 L87.0 502.6 L88.5 501.5 L90.0 500.7 L91.5 500.1 L93.0 499.9 L94.5 500.0 L96.0 500.3 L97.5 501.0 L99.0 502.0 L100.5 503.2 L102.0 504.8 L103.5 506.5 L105.0 508.6 L106.5 510.9 L108.0 513.4 L109.5 516.0 L111.0 518.9 L112.5 521.9 L114.0 525.1 L115.5 528.3 L117.0 531.6 L118.5 535.0 L120.0 538.4 L121.5 541.8 L123.0 545.2 L124.5 548.5 L126.0 551.7 L127.5 554.8 L129.0 557.8 L130.5 560.6 L132.0 563.3 L133.5 565.7 L135.0 567.9 L136.5 569.9 L138.0 571.6 L139.5 573.1 L141.0 574.3 L142.5 575.2 L144.0 575.8 L145.5 576.1 L147.0 576.1 L148.5 575.7 L150.0 575.1 L151.5 574.2 L153.0 573.0 L154.5 571.6 L156.0 569.8 L157.5 567.8 L159.0 565.6 L160.5 563.2 L162.0 560.5 L163.5 557.7 L165.0 554.7 L166.5 551.6 L168.0 548.3 L169.5 545.0 L171.0 541.7 L172.5 538.3 L174.0 534.9 L175.5 531.5 L177.0 528.2 L178.5 524.9 L180.0 521.8 L181.5 518.8 L183.0 515.9 L184.5 513.3 L186.0 510.8 L187.5 508.5 L189.0 506.5 L190.5 504.7 L192.0 503.2 L193.5 501.9 L195.0 501.0 L196.5 500.3 L198.0 500.0 L199.5 499.9 L201.0 500.2 L202.5 500.7 L204.0 501.6 L205.5 502.7 L207.0 504.1 L208.5 505.8 L210.0 507.7 L211.5 509.9 L213.0 512.3 L214.5 515.0 L216.0 517.7 L217.5 520.7 L219.0 523.8 L220.5 527.0 L222.0 530.3 L223.5 533.7 L225.0 537.0 L226.5 540.4 L228.0 543.8 L229.5 547.2 L231.0 550.4 L232.5 553.6 L234.0 556.6 L235.5 559.5 L237.0 562.2 L238.5 564.7 L240.0 567.1 L241.5 569.1 L243.0 571.0 L244.5 572.5 L246.0 573.8 L247.5 574.8 L249.0 575.6 L250.5 576.0 L252.0 576.1 L253.5 575.9 L255.0 575.4 L256.5 574.6 L258.0 573.6 L259.5 572.2 L261.0 570.6 L262.5 568.7 L264.0 566.5 L265.5 564.2 L267.0 561.6 L268.5 558.8 L270.0 555.9 L271.5 552.8 L273.0 549.6 L274.5 546.4 L276.0 543.0 L277.5 539.6 L279.0 536.2 L280.5 532.8 L282.0 529.5 L283.5 526.2 L285.0 523.0 L286.5 520.0 L288.0 517.1 L289.5 514.3 L291.0 511.7 L292.5 509.4 L294.0 507.3 L295.5 505.4 L297.0 503.7 L298.5 502.4 L300.0 501.3 L301.5 500.6 L303.0 500.1 L304.5 499.9 L306.0 500.0 L307.5 500.5 L309.0 501.2 L310.5 502.2 L312.0 503.5 L313.5 505.1 L315.0 506.9 L316.5 509.0 L318.0 511.3 L319.5 513.9 L321.0 516.6 L322.5 519.5 L324.0 522.5 L325.5 525.7 L327.0 529.0 L328.5 532.3 L330.0 535.7 L331.5 539.1 L333.0 542.5 L334.5 545.8 L336.0 549.1 L337.5 552.3 L339.0 555.4 L340.5 558.4 L342.0 561.2 L343.5 563.8 L345.0 566.2 L346.5 568.3 L348.0 570.3 L349.5 571.9 L351.0 573.4 L352.5 574.5 L354.0 575.3 L355.5 575.9 L357.0 576.1 L358.5 576.0 L360.0 575.7 L361.5 575.0 L363.0 574.0 L364.5 572.8 L366.0 571.2 L367.5 569.5 L369.0 567.4 L370.5 565.1 L372.0 562.6 L373.5 560.0 L375.0 557.1 L376.5 554.1 L378.0 550.9 L379.5 547.7 L381.0 544.4 L382.5 541.0 L384.0 537.6 L385.5 534.2 L387.0 530.8 L388.5 527.5 L390.0 524.3 L391.5 521.2 L393.0 518.2 L394.5 515.4 L396.0 512.7 L397.5 510.3 L399.0 508.1 L400.5 506.1 L402.0 504.4 L403.5 502.9 L405.0 501.7 L406.5 500.8 L408.0 500.2 L409.5 499.9 L411.0 499.9 L412.5 500.3 L414.0 500.9 L415.5 501.8 L417.0 503.0 L418.5 504.4 L420.0 506.2 L421.5 508.2 L423.0 510.4 L424.5 512.8 L426.0 515.5 L427.5 518.3 L429.0 521.3 L430.5 524.4 L432.0 527.7 L433.5 531.0 L435.0 534.3" fill="none" stroke="#ff8000" stroke-width="1" stroke-linejoin="round" shape-rendering="crispEdges"/><path d="M19.5 507.7 L21.0 501.8 L22.5 496.1 L24.0 490.8 L25.5 485.8 L27.0 481.3 L28.5 477.2 L30.0 473.6 L31.5 470.5 L33.0 468.0 L34.5 466.0 L36.0 464.6 L37.5 463.7 L39.0 463.5 L40.5 463.9 L42.0 464.8 L43.5 466.3 L45.0 468.4 L46.5 471.1 L48.0 474.2 L49.5 477.9 L51.0 482.1 L52.5 486.7 L54.0 491.7 L55.5 497.1 L57.0 502.8 L58.5 508.8 L60.0 515.1 L61.5 521.5 L63.0 528.0 L64.5 534.6 L66.0 541.3 L67.5 547.9 L69.0 554.4 L70.5 560.9 L72.0 567.1 L73.5 573.1 L75.0 578.8 L76.5 584.2 L78.0 589.2 L79.5 593.8 L81.0 598.0 L82.5 601.7 L84.0 604.9 L85.5 607.6 L87.0 609.7 L88.5 611.2 L90.0 612.1 L91.5 612.5 L93.0 612.3 L94.5 611.4 L96.0 610.0 L97.5 608.0 L99.0 605.5 L100.5 602.4 L102.0 598.8 L103.5 594.8 L105.0 590.2 L106.5 585.3 L108.0 580.0 L109.5 574.3 L111.0 568.4 L112.5 562.2 L114.0 555.8 L115.5 549.3 L117.0 542.7 L118.5 536.0 L120.0 529.4 L121.5 522.9 L123.0 516.4 L124.5 510.1 L126.0 504.1 L127.5 498.3 L129.0 492.9 L130.5 487.8 L132.0 483.1 L133.5 478.8 L135.0 475.0 L136.5 471.7 L138.0 468.9 L139.5 466.7 L141.0 465.1 L142.5 464.0 L144.0 463.5 L145.5 463.6 L147.0 464.3 L148.5 465.6 L150.0 467.5 L151.5 469.9 L153.0 472.9 L154.5 476.4 L156.0 480.4 L157.5 484.8 L159.0 489.7 L160.5 494.9 L162.0 500.5 L163.5 506.4 L165.0 512.5 L166.5 518.9 L168.0 525.4 L169.5 532.0 L171.0 538.6 L172.5 545.3 L174.0 551.8 L175.5 558.3 L177.0 564.6 L178.5 570.7 L180.0 576.5 L181.5 582.1 L183.0 587.3 L184.5 592.0 L186.0 596.4 L187.5 600.3 L189.0 603.7 L190.5 606.6 L192.0 608.9 L193.5 610.6 L195.0 611.8 L196.5 612.4 L198.0 612.4 L199.5 611.8 L201.0 610.7 L202.5 608.9 L204.0 606.6 L205.5 603.7 L207.0 600.3 L208.5 596.5 L210.0 592.1 L211.5 587.3 L213.0 582.1 L214.5 576.6 L216.0 570.8 L217.5 564.7 L219.0 558.4 L220.5 551.9 L222.0 545.3 L223.5 538.7 L225.0 532.1 L226.5 525.5 L228.0 519.0 L229.5 512.6 L231.0 506.5 L232.5 500.6 L234.0 495.0 L235.5 489.8 L237.0 484.9 L238.5 480.4 L240.0 476.5 L241.5 473.0 L243.0 470.0 L244.5 467.5 L246.0 465.7 L247.5 464.4 L249.0 463.6 L250.5 463.5 L252.0 464.0 L253.5 465.1 L255.0 466.7 L256.5 468.9 L258.0 471.7 L259.5 474.9 L261.0 478.7 L262.5 483.0 L264.0 487.7 L265.5 492.8 L267.0 498.2 L268.5 504.0 L270.0 510.1 L271.5 516.3 L273.0 522.8 L274.5 529.3 L276.0 536.0 L277.5 542.6 L279.0 549.2 L280.5 555.7 L282.0 562.1 L283.5 568.3 L285.0 574.2 L286.5 579.9 L288.0 585.2 L289.5 590.2 L291.0 594.7 L292.5 598.8 L294.0 602.4 L295.5 605.5 L297.0 608.0 L298.5 610.0 L300.0 611.4 L301.5 612.3 L303.0 612.5 L304.5 612.1 L306.0 611.2 L307.5 609.7 L309.0 607.6 L310.5 604.9 L312.0 601.8 L313.5 598.1 L315.0 593.9 L316.5 589.3 L318.0 584.3 L319.5 578.9 L321.0 573.2 L322.5 567.2 L324.0 560.9 L325.5 554.5 L327.0 548.0 L328.5 541.4 L330.0 534.7 L331.5 528.1 L333.0 521.6 L334.5 515.1 L336.0 508.9 L337.5 502.9 L339.0 497.2 L340.5 491.8 L342.0 486.8 L343.5 482.2 L345.0 478.0 L346.5 474.3 L348.0 471.1 L349.5 468.4 L351.0 466.3 L352.5 464.8 L354.0 463.9 L355.5 463.5 L357.0 463.7 L358.5 464.6 L360.0 466.0 L361.5 468.0 L363.0 470.5 L364.5 473.6 L366.0 477.2 L367.5 481.2 L369.0 485.8 L370.5 490.7 L372.0 496.0 L373.5 501.7 L375.0 507.6 L376.5 513.8 L378.0 520.2 L379.5 526.7 L381.0 533.3 L382.5 540.0 L384.0 546.6 L385.5 553.1 L387.0 559.6 L388.5 565.9 L390.0 571.9 L391.5 577.7 L393.0 583.1 L394.5 588.2 L396.0 592.9 L397.5 597.2 L399.0 601.0 L400.5 604.3 L402.0 607.1 L403.5 609.3 L405.0 610.9 L406.5 612.0 L408.0 612.5 L409.5 612.4 L411.0 611.7 L412.5 610.4 L414.0 608.5 L415.5 606.1 L417.0 603.1 L418.5 599.6 L420.0 595.6 L421.5 591.2 L423.0 586.3 L424.5 581.1 L426.0 575.5 L427.5 569.6 L429.0 563.5 L430.5 557.1 L432.0 550.6 L433.5 544.0 L435.0 537.4" fill="none" stroke="#ff0000" stroke-width="1" stroke-linejoin="round" shape-rendering="crispEdges"/><path d="M19.5 423.5 V652.5" stroke="#00ff00" stroke-width="1.2"/><path d="M11 415 H28 L19.5 423.5 Z" fill="#ff00ff"/><rect x="11" y="415" width="17" height="1.6" fill="#00ffff"/><rect x="18" y="417" width="2.4" height="4" fill="#222"/><rect x="18.4" y="418" width="1.6" height="1" fill="#ff0"/><rect x="18.4" y="420" width="1.6" height="1" fill="#ff0"/><circle cx="19.5" cy="550.5" r="3" fill="none" stroke="#e020e0" stroke-width="1"/><rect x="18.8" y="500" width="1.6" height="4" fill="#2020ff"/></svg>
<div class="abs" style="left:8.00px;top:663.00px;width:550.00px;height:1.00px;background:#fff;"></div>
<div class="abs" style="left:8.00px;top:664.00px;width:550.00px;height:11.00px;background:linear-gradient(#e4e4e4,#ededed 30%,#ededed 70%,#e6e6e6);"></div>
<svg class="abs" style="left:12px;top:664px" width="8" height="11"><path d="M6 1.5 V9.5 L1.5 5.5 Z" fill="#444"/></svg>
<svg class="abs" style="left:545px;top:664px" width="8" height="11"><path d="M2 1.5 V9.5 L6.5 5.5 Z" fill="#444"/></svg>
<div class="b" style="left:478.00px;top:664.50px;width:62.00px;height:10.00px;border-color:#979797;border-radius:2px;"></div>
<svg class="abs" style="left:503px;top:666px" width="12" height="7"><path d="M3.5 1 V6 M6 1 V6 M8.500 1 V6" stroke="#555" stroke-width="1"/></svg>
<div class="abs" style="left:9.00px;top:681.00px;width:58.00px;height:57.50px;border:1px solid #fff;border-right-color:#a0a0a0;border-bottom-color:#a0a0a0;"></div>
<div class="t" style="top:690px;font-size:11px;left:13.70px;letter-spacing:-1.072px;">T1</div>
<div class="t" style="top:704px;font-size:11px;left:13.70px;letter-spacing:-1.072px;">T2</div>
<div class="t" style="top:724px;font-size:11px;left:13.70px;letter-spacing:-0.169px;">T2-T1</div>
<div class="b" style="left:34.00px;top:688.00px;width:13.00px;height:13.00px;"></div>
<svg class="abs" style="left:34px;top:688px" width="13" height="13"><path d="M11.0 5.3 H7.0 V2.0 L2.0 6.5 L7.0 11.0 V7.7 H11.0 Z" fill="#000"/></svg>
<div class="b" style="left:51.00px;top:688.00px;width:13.00px;height:13.00px;"></div>
<svg class="abs" style="left:51px;top:688px" width="13" height="13"><path d="M2.0 5.3 H6.0 V2.0 L11.0 6.5 L6.0 11.0 V7.7 H2.0 Z" fill="#000"/></svg>
<div class="b" style="left:34.00px;top:705.00px;width:13.00px;height:14.00px;"></div>
<svg class="abs" style="left:34px;top:705px" width="13" height="14"><path d="M11.0 5.8 H7.0 V2.5 L2.0 7.0 L7.0 11.5 V8.2 H11.0 Z" fill="#000"/></svg>
<div class="b" style="left:51.00px;top:705.00px;width:13.00px;height:14.00px;"></div>
<svg class="abs" style="left:51px;top:705px" width="13" height="14"><path d="M2.0 5.8 H6.0 V2.5 L11.0 7.0 L6.0 11.5 V8.2 H2.0 Z" fill="#000"/></svg>
<div class="abs" style="left:69.00px;top:681.00px;width:322.00px;height:57.50px;background:#fff;border:1px solid #fff;border-top:2px solid #828282;border-left:2px solid #828282;"></div>
<div class="t" style="top:684px;font-size:11px;left:-96.10px;width:400px;text-align:center;letter-spacing:-0.637px;">Time</div>
<div class="t" style="top:684px;font-size:11px;left:-15.80px;width:400px;text-align:center;letter-spacing:-0.271px;">Channel_A</div>
<div class="t" style="top:684px;font-size:11px;left:63.70px;width:400px;text-align:center;letter-spacing:-0.382px;">Channel_B</div>
<div class="t" style="top:697px;font-size:11px;left:-96.10px;width:400px;text-align:center;letter-spacing:-0.208px;">40.549 ms</div>
<div class="t" style="top:697px;font-size:11px;left:-15.80px;width:400px;text-align:center;letter-spacing:-0.177px;">-303.409 uV</div>
<div class="t" style="top:697px;font-size:11px;left:63.70px;width:400px;text-align:center;letter-spacing:-0.262px;">8.587 mV</div>
<div class="t" style="top:710px;font-size:11px;left:-96.10px;width:400px;text-align:center;letter-spacing:-0.208px;">40.549 ms</div>
<div class="t" style="top:710px;font-size:11px;left:-15.80px;width:400px;text-align:center;letter-spacing:-0.177px;">-303.409 uV</div>
<div class="t" style="top:710px;font-size:11px;left:63.70px;width:400px;text-align:center;letter-spacing:-0.262px;">8.587 mV</div>
<div class="t" style="top:723px;font-size:11px;left:-96.10px;width:400px;text-align:center;letter-spacing:-0.085px;">0.000 s</div>
<div class="t" style="top:723px;font-size:11px;left:-15.80px;width:400px;text-align:center;letter-spacing:-0.132px;">0.000 V</div>
<div class="t" style="top:723px;font-size:11px;left:63.70px;width:400px;text-align:center;letter-spacing:-0.132px;">0.000 V</div>
<div class="b" style="left:399.00px;top:687.00px;width:61.00px;height:21.00px;"></div>
<div class="t" style="top:692px;font-size:11px;left:229.10px;width:400px;text-align:center;letter-spacing:-0.067px;">Reverse</div>
<div class="b" style="left:399.00px;top:715.00px;width:61.00px;height:21.00px;"></div>
<div class="t" style="top:720px;font-size:11px;left:229.10px;width:400px;text-align:center;letter-spacing:-0.395px;">Save</div>
<div class="t" style="top:730px;font-size:11px;left:468.50px;letter-spacing:0.118px;">Ext. trigger</div>
<svg class="abs" style="left:526.6px;top:729.7px" width="14" height="14"><circle cx="7" cy="7" r="5.2" fill="#ececec" stroke="#c4c4c4" stroke-width="1"/></svg>
<div class="g" style="left:9.00px;top:753.00px;width:129.00px;height:71.00px;"></div>
<div class="abs" style="left:15.40px;top:752.00px;width:47.90px;height:3.00px;background:#f0f0f0;"></div>
<div class="t" style="top:748px;font-size:11px;left:17.40px;letter-spacing:-0.499px;">Timebase</div>
<div class="t" style="top:766px;font-size:11px;left:10.70px;letter-spacing:-0.346px;">Scale:</div>
<div class="in" style="left:48.00px;top:759.00px;width:85.00px;height:19.00px;"></div>
<div class="t" style="top:764px;font-size:11px;left:53.30px;letter-spacing:-0.248px;">500 us/Div</div>
<div class="t" style="top:785px;font-size:11px;left:10.70px;letter-spacing:-0.122px;">X pos.(Div):</div>
<div class="in" style="left:72.00px;top:780.00px;width:61.00px;height:19.00px;"></div>
<div class="t" style="top:785px;font-size:11px;left:77.90px;">0</div>
<div class="b ba" style="left:16.00px;top:805.00px;width:24.00px;height:17.00px;"></div>
<div class="t" style="top:808px;font-size:11px;left:-172.40px;width:400px;text-align:center;">Y/T</div>
<div class="b" style="left:43.00px;top:805.00px;width:25.00px;height:17.00px;"></div>
<div class="t" style="top:808px;font-size:11px;left:-144.90px;width:400px;text-align:center;">Add</div>
<div class="b" style="left:72.00px;top:805.00px;width:26.00px;height:17.00px;"></div>
<div class="t" style="top:808px;font-size:11px;left:-115.40px;width:400px;text-align:center;">B/A</div>
<div class="b" style="left:100.00px;top:805.00px;width:28.00px;height:17.00px;"></div>
<div class="t" style="top:808px;font-size:11px;left:-86.40px;width:400px;text-align:center;">A/B</div>
<div class="g" style="left:140.00px;top:753.00px;width:127.00px;height:71.00px;"></div>
<div class="abs" style="left:146.80px;top:752.00px;width:52.40px;height:3.00px;background:#f0f0f0;"></div>
<div class="t" style="top:748px;font-size:11px;left:148.80px;letter-spacing:-0.263px;">Channel A</div>
<div class="t" style="top:766px;font-size:11px;left:142.70px;letter-spacing:-0.346px;">Scale:</div>
<div class="in" style="left:179.00px;top:759.00px;width:86.00px;height:19.00px;"></div>
<div class="t" style="top:764px;font-size:11px;left:185.50px;letter-spacing:-0.478px;">1 mV/Div</div>
<div class="t" style="top:785px;font-size:11px;left:142.70px;letter-spacing:-0.105px;">Y pos.(Div):</div>
<div class="in" style="left:204.00px;top:780.00px;width:61.00px;height:19.00px;"></div>
<div class="t" style="top:785px;font-size:11px;left:209.90px;">0</div>
<div class="b ba" style="left:144.00px;top:805.00px;width:23.00px;height:17.00px;"></div>
<div class="t" style="top:808px;font-size:11px;left:-44.90px;width:400px;text-align:center;">AC</div>
<div class="b" style="left:169.00px;top:805.00px;width:25.00px;height:17.00px;"></div>
<div class="t" style="top:808px;font-size:11px;left:-18.90px;width:400px;text-align:center;">0</div>
<div class="b" style="left:196.00px;top:805.00px;width:25.00px;height:17.00px;"></div>
<div class="t" style="top:808px;font-size:11px;left:8.10px;width:400px;text-align:center;">DC</div>
<svg class="abs" style="left:246.6px;top:805.2px" width="14" height="14"><circle cx="7" cy="7" r="5.3" fill="#e8e8e8" stroke="#a8a8a8" stroke-width="1"/><circle cx="7" cy="7" r="3" fill="#a9a9a9" stroke="#929292" stroke-width="0.8"/></svg>
<div class="g" style="left:269.00px;top:753.00px;width:129.00px;height:71.00px;"></div>
<div class="abs" style="left:275.00px;top:752.00px;width:52.40px;height:3.00px;background:#f0f0f0;"></div>
<div class="t" style="top:748px;font-size:11px;left:277.00px;letter-spacing:-0.331px;">Channel B</div>
<div class="t" style="top:766px;font-size:11px;left:270.80px;letter-spacing:-0.346px;">Scale:</div>
<div class="in" style="left:309.00px;top:759.00px;width:87.00px;height:19.00px;"></div>
<div class="t" style="top:764px;font-size:11px;left:315.70px;letter-spacing:-0.428px;">10 mV/Div</div>
<div class="t" style="top:785px;font-size:11px;left:270.80px;letter-spacing:-0.105px;">Y pos.(Div):</div>
<div class="in" style="left:335.00px;top:780.00px;width:61.00px;height:19.00px;"></div>
<div class="t" style="top:785px;font-size:11px;left:340.50px;">0</div>
<div class="b ba" style="left:274.00px;top:807.00px;width:24.00px;height:16.00px;"></div>
<div class="t" style="top:810px;font-size:11px;left:85.60px;width:400px;text-align:center;">AC</div>
<div class="b" style="left:302.00px;top:807.00px;width:19.00px;height:16.00px;"></div>
<div class="t" style="top:810px;font-size:11px;left:111.10px;width:400px;text-align:center;">0</div>
<div class="b" style="left:325.00px;top:807.00px;width:23.00px;height:16.00px;"></div>
<div class="t" style="top:810px;font-size:11px;left:136.10px;width:400px;text-align:center;">DC</div>
<div class="b" style="left:351.00px;top:807.00px;width:17.00px;height:16.00px;"></div>
<div class="t" style="top:810px;font-size:11px;left:159.10px;width:400px;text-align:center;">-</div>
<svg class="abs" style="left:381.5px;top:806.7px" width="14" height="14"><circle cx="7" cy="7" r="5.3" fill="#e8e8e8" stroke="#a8a8a8" stroke-width="1"/><circle cx="7" cy="7" r="3" fill="#a9a9a9" stroke="#929292" stroke-width="0.8"/></svg>
<div class="g" style="left:400.00px;top:753.00px;width:156.00px;height:71.00px;"></div>
<div class="abs" style="left:406.30px;top:752.00px;width:36.30px;height:3.00px;background:#f0f0f0;"></div>
<div class="t" style="top:748px;font-size:11px;left:408.30px;letter-spacing:-0.307px;">Trigger</div>
<div class="t" style="top:766px;font-size:11px;left:403.70px;letter-spacing:-0.350px;">Edge:</div>
<div class="b ba" style="left:448.00px;top:764.00px;width:16.00px;height:15.00px;"></div>
<svg class="abs" style="left:448px;top:764px" width="16" height="15" viewBox="0 0 16 15"><path d="M3 11 H8 V4 H12.500" fill="none" stroke="#000" stroke-width="1.3"/><path d="M5 8.500 H11" stroke="#000" stroke-width="1.1"/></svg>
<div class="b" style="left:466.00px;top:764.00px;width:16.00px;height:15.00px;"></div>
<svg class="abs" style="left:466px;top:764px" width="16" height="15" viewBox="0 0 16 15"><path d="M3 4 H7.500 V11 H12.500" fill="none" stroke="#000" stroke-width="1.3"/><path d="M5 7.500 H11" stroke="#000" stroke-width="1.1"/></svg>
<div class="b ba" style="left:487.00px;top:764.00px;width:18.00px;height:17.00px;"></div>
<div class="t" style="top:767px;font-size:11px;left:295.60px;width:400px;text-align:center;">A</div>
<div class="b bd" style="left:507.00px;top:764.00px;width:17.00px;height:17.00px;"></div>
<div class="t" style="top:767px;font-size:11px;left:315.10px;width:400px;text-align:center;color:#8c8c8c;">B</div>
<div class="b bd" style="left:526.00px;top:764.00px;width:22.00px;height:17.00px;"></div>
<div class="t" style="top:767px;font-size:11px;left:336.60px;width:400px;text-align:center;color:#8c8c8c;">Ext</div>
<div class="t" style="top:786px;font-size:11px;left:403.70px;letter-spacing:-0.143px;">Level:</div>
<div class="in" style="left:447.00px;top:784.00px;width:69.00px;height:18.00px;"></div>
<div class="t" style="top:788px;font-size:11px;left:452.60px;">0</div>
<div class="in" style="left:517.00px;top:784.00px;width:32.00px;height:18.00px;"></div>
<div class="t" style="top:788px;font-size:11px;left:524.40px;">V</div>
<svg class="abs" style="left:547px;top:816px" width="11" height="11"><rect x="8" y="0" width="2" height="2" fill="#b4b4b4"/><rect x="4" y="4" width="2" height="2" fill="#b4b4b4"/><rect x="8" y="4" width="2" height="2" fill="#b4b4b4"/><rect x="0" y="8" width="2" height="2" fill="#b4b4b4"/><rect x="4" y="8" width="2" height="2" fill="#b4b4b4"/><rect x="8" y="8" width="2" height="2" fill="#b4b4b4"/></svg>
<div class="b" style="left:405.00px;top:805.00px;width:37.00px;height:17.00px;"></div>
<div class="t" style="top:808px;font-size:11px;left:223.10px;width:400px;text-align:center;letter-spacing:-0.532px;">Single</div>
<div class="b" style="left:444.00px;top:805.00px;width:41.00px;height:17.00px;"></div>
<div class="t" style="top:808px;font-size:11px;left:264.10px;width:400px;text-align:center;letter-spacing:-0.544px;">Normal</div>
<div class="b" style="left:488.00px;top:805.00px;width:29.00px;height:17.00px;"></div>
<div class="t" style="top:808px;font-size:11px;left:302.10px;width:400px;text-align:center;letter-spacing:-0.110px;">Auto</div>
<div class="b ba" style="left:519.00px;top:805.00px;width:32.00px;height:17.00px;"></div>
<div class="t" style="top:808px;font-size:11px;left:334.60px;width:400px;text-align:center;letter-spacing:-0.028px;">None</div>
<div class="w" style="left:568.00px;top:590.00px;width:223.00px;height:244.50px;"></div>
<div class="wc" style="left:576.00px;top:620.00px;width:207.00px;height:206.00px;"></div>
<div class="t" style="top:603px;font-size:12px;left:580.50px;color:#505060;letter-spacing:-0.199px;">Function generator-XFG1</div>
<div class="cl" style="left:750.00px;top:600.00px;width:31.00px;height:17.00px;"></div>
<svg class="abs" style="left:759.5px;top:603.5px" width="12" height="10" viewBox="0 0 12 10"><path d="M0.8 1.2 H4.2 L6 3.1 L7.8 1.2 H11.2 L7.9 5 L11.2 8.800 H7.8 L6 6.9 L4.2 8.800 H0.8 L4.1 5 Z" fill="#f6f6f6" stroke="#4a4a4a" stroke-width="1" stroke-linejoin="round"/></svg>
<div class="g" style="left:580.00px;top:628.00px;width:198.00px;height:35.00px;"></div>
<div class="abs" style="left:585.50px;top:627.00px;width:59.20px;height:3.00px;background:#f0f0f0;"></div>
<div class="t" style="top:623px;font-size:11px;left:587.50px;letter-spacing:-0.002px;">Waveforms</div>
<div class="b ba" style="left:590.00px;top:638.00px;width:58.00px;height:16.00px;"></div>
<svg class="abs" style="left:590px;top:638px" width="58" height="16" viewBox="0 0 58 16"><path d="M7 7 C10 4.500 15 3.500 19 6 C23 8.500 27 10 30.500 8 C34.500 5.500 39 3.500 43 5 C47 6 50 6.500 52.500 7.500" fill="none" stroke="#000" stroke-width="1"/></svg>
<div class="b" style="left:652.00px;top:638.00px;width:58.00px;height:16.00px;"></div>
<svg class="abs" style="left:652px;top:638px" width="58" height="16" viewBox="0 0 58 16"><path d="M6.500 9.500 L15.500 4.500 L26 9.500 L35 4.500 L45.500 9.500 L51.500 6.500" fill="none" stroke="#222" stroke-width="0.9"/></svg>
<div class="b" style="left:713.00px;top:638.00px;width:58.00px;height:16.00px;"></div>
<svg class="abs" style="left:713px;top:638px" width="58" height="16" viewBox="0 0 58 16"><path d="M6.500 10.500 H15.500 V5.500 H23.500 V10.500 H32.500 V5.500 H41.500 V10.500 H51" fill="none" stroke="#000" stroke-width="1"/></svg>
<div class="g" style="left:580.00px;top:664.00px;width:198.00px;height:119.00px;"></div>
<div class="abs" style="left:585.50px;top:663.00px;width:69.90px;height:3.00px;background:#f0f0f0;"></div>
<div class="t" style="top:659px;font-size:11px;left:587.50px;letter-spacing:-0.229px;">Signal options</div>
<div class="t" style="top:678px;font-size:11px;left:590.60px;letter-spacing:-0.053px;">Frequency:</div>
<div class="in" style="left:655.00px;top:674.00px;width:74.00px;height:18.00px;"></div>
<div class="t" style="top:679px;font-size:11px;left:662.40px;">1</div>
<div class="in" style="left:730.00px;top:674.00px;width:44.00px;height:18.00px;"></div>
<div class="t" style="top:678px;font-size:11px;left:734.20px;">kHz</div>
<div class="t" style="top:698px;font-size:11px;left:590.60px;letter-spacing:-0.072px;">Duty cycle:</div>
<div class="in ind" style="left:655.00px;top:693.00px;width:74.00px;height:19.00px;"></div>
<div class="t" style="top:698px;font-size:11px;left:662.00px;color:#808080;">50</div>
<div class="in ind" style="left:730.00px;top:693.00px;width:44.00px;height:19.00px;"></div>
<div class="t" style="top:697px;font-size:11px;left:738.70px;color:#808080;">%</div>
<div class="t" style="top:717px;font-size:11px;left:590.60px;letter-spacing:-0.148px;">Amplitude:</div>
<div class="in" style="left:655.00px;top:713.00px;width:74.00px;height:18.00px;"></div>
<div class="t" style="top:718px;font-size:11px;left:662.40px;">1</div>
<div class="in" style="left:730.00px;top:713.00px;width:44.00px;height:18.00px;"></div>
<div class="t" style="top:717px;font-size:11px;left:734.20px;">mVp</div>
<div class="t" style="top:737px;font-size:11px;left:590.60px;letter-spacing:0.328px;">Offset:</div>
<div class="in" style="left:655.00px;top:733.00px;width:74.00px;height:17.00px;"></div>
<div class="t" style="top:737px;font-size:11px;left:661.50px;">0</div>
<div class="in" style="left:730.00px;top:733.00px;width:44.00px;height:17.00px;"></div>
<div class="t" style="top:736px;font-size:11px;left:738.10px;">V</div>
<div class="b bd" style="left:616.00px;top:757.00px;width:122.00px;height:21.00px;"></div>
<div class="t" style="top:763px;font-size:11px;left:476.60px;width:400px;text-align:center;color:#8c8c8c;letter-spacing:-0.162px;">Set rise/Fall time</div>
<div class="t" style="top:794px;font-size:12px;left:402.20px;width:400px;text-align:center;">+</div>
<svg class="abs" style="left:593.6px;top:804.3px" width="14" height="14"><circle cx="7" cy="7" r="5.3" fill="#e8e8e8" stroke="#a8a8a8" stroke-width="1"/><circle cx="7" cy="7" r="3" fill="#a9a9a9" stroke="#929292" stroke-width="0.8"/></svg>
<div class="t" style="top:791px;font-size:11px;left:478.00px;width:400px;text-align:center;letter-spacing:-0.688px;">Common</div>
<svg class="abs" style="left:664.5px;top:804.3px" width="14" height="14"><circle cx="7" cy="7" r="5.3" fill="#e8e8e8" stroke="#a8a8a8" stroke-width="1"/><circle cx="7" cy="7" r="3" fill="#a9a9a9" stroke="#929292" stroke-width="0.8"/></svg>
<div class="abs" style="left:751.00px;top:802.00px;width:6.00px;height:1.00px;background:#000;"></div>
<svg class="abs" style="left:745.5px;top:805.8px" width="14" height="14"><circle cx="7" cy="7" r="5.2" fill="#ececec" stroke="#c4c4c4" stroke-width="1"/></svg>
<svg class="abs" style="left:772px;top:815px" width="11" height="11"><rect x="8" y="0" width="2" height="2" fill="#b4b4b4"/><rect x="4" y="4" width="2" height="2" fill="#b4b4b4"/><rect x="8" y="4" width="2" height="2" fill="#b4b4b4"/><rect x="0" y="8" width="2" height="2" fill="#b4b4b4"/><rect x="4" y="8" width="2" height="2" fill="#b4b4b4"/><rect x="8" y="8" width="2" height="2" fill="#b4b4b4"/></svg>
<div class="w" style="left:793.00px;top:660.00px;width:194.00px;height:174.50px;"></div>
<div class="wc" style="left:801.00px;top:690.00px;width:178.00px;height:136.00px;"></div>
<div class="t" style="top:673px;font-size:12px;left:805.10px;color:#505060;letter-spacing:0.227px;">Multimeter-XMM1</div>
<div class="cl" style="left:946.00px;top:670.00px;width:31.00px;height:17.00px;"></div>
<svg class="abs" style="left:955.5px;top:673.5px" width="12" height="10" viewBox="0 0 12 10"><path d="M0.8 1.2 H4.2 L6 3.1 L7.8 1.2 H11.2 L7.9 5 L11.2 8.800 H7.8 L6 6.9 L4.2 8.800 H0.8 L4.1 5 Z" fill="#f6f6f6" stroke="#4a4a4a" stroke-width="1" stroke-linejoin="round"/></svg>
<div class="abs" style="left:801.50px;top:690.50px;width:177.50px;height:31.00px;background:#000;border:4px solid #fff;border-top-color:#9a9a9a;border-left-color:#9a9a9a;box-shadow:inset 1px 1px 0 #555;"></div>
<div class="t" style="top:697px;font-size:16.3px;left:690.20px;width:400px;text-align:center;color:#fff;letter-spacing:-0.210px;">707.106 uV</div>
<div class="g" style="left:808.00px;top:731.00px;width:164.00px;height:26.50px;"></div>
<div class="b" style="left:820.00px;top:734.00px;width:28.00px;height:20.00px;"></div>
<div class="t" style="top:739px;font-size:11px;left:633.60px;width:400px;text-align:center;">A</div>
<div class="b ba" style="left:857.00px;top:734.00px;width:28.00px;height:20.00px;"></div>
<div class="t" style="top:739px;font-size:11px;left:670.60px;width:400px;text-align:center;">V</div>
<div class="b" style="left:895.00px;top:734.00px;width:28.00px;height:20.00px;"></div>
<div class="t" style="top:739px;font-size:11px;left:708.60px;width:400px;text-align:center;">&#937;</div>
<div class="b" style="left:932.00px;top:734.00px;width:29.00px;height:20.00px;"></div>
<div class="t" style="top:739px;font-size:11px;left:746.10px;width:400px;text-align:center;">dB</div>
<div class="g" style="left:832.60px;top:757.00px;width:113.00px;height:26.50px;border-top:none;border-radius:0 0 3px 3px;"></div>
<div class="b ba" style="left:842.00px;top:764.00px;width:42.00px;height:14.00px;"></div>
<svg class="abs" style="left:842px;top:764px" width="42" height="14" viewBox="0 0 42 14"><path d="M9.500 8.500 C12 4 14.500 2.500 17 4.500 C20 7 22.500 10.500 25.500 9.500 C28 8.500 30 7 32 5.500" fill="none" stroke="#000" stroke-width="1.6"/></svg>
<div class="b" style="left:896.00px;top:764.00px;width:40.00px;height:14.00px;"></div>
<svg class="abs" style="left:896px;top:764px" width="40" height="14" viewBox="0 0 40 14"><path d="M9 7 H31" stroke="#000" stroke-width="2"/></svg>
<div class="t" style="top:792px;font-size:12px;left:614.60px;width:400px;text-align:center;">+</div>
<svg class="abs" style="left:806.9px;top:805.3px" width="14" height="14"><circle cx="7" cy="7" r="5.3" fill="#e8e8e8" stroke="#a8a8a8" stroke-width="1"/><circle cx="7" cy="7" r="3" fill="#a9a9a9" stroke="#929292" stroke-width="0.8"/></svg>
<div class="b" style="left:856.00px;top:795.00px;width:70.00px;height:17.00px;"></div>
<div class="t" style="top:798px;font-size:11px;left:690.60px;width:400px;text-align:center;letter-spacing:0.187px;">Set...</div>
<div class="abs" style="left:965.00px;top:801.00px;width:6.00px;height:1.00px;background:#000;"></div>
<svg class="abs" style="left:958.2px;top:805.5px" width="14" height="14"><circle cx="7" cy="7" r="5.3" fill="#e8e8e8" stroke="#a8a8a8" stroke-width="1"/><circle cx="7" cy="7" r="3" fill="#a9a9a9" stroke="#929292" stroke-width="0.8"/></svg>
<svg class="abs" style="left:968px;top:815px" width="11" height="11"><rect x="8" y="0" width="2" height="2" fill="#b4b4b4"/><rect x="4" y="4" width="2" height="2" fill="#b4b4b4"/><rect x="8" y="4" width="2" height="2" fill="#b4b4b4"/><rect x="0" y="8" width="2" height="2" fill="#b4b4b4"/><rect x="4" y="8" width="2" height="2" fill="#b4b4b4"/><rect x="8" y="8" width="2" height="2" fill="#b4b4b4"/></svg>
<div class="w" style="left:990.00px;top:660.00px;width:194.00px;height:174.50px;"></div>
<div class="wc" style="left:998.00px;top:690.00px;width:178.00px;height:136.00px;"></div>
<div class="t" style="top:673px;font-size:12px;left:1002.10px;color:#505060;letter-spacing:0.227px;">Multimeter-XMM2</div>
<div class="cl" style="left:1143.00px;top:670.00px;width:31.00px;height:17.00px;"></div>
<svg class="abs" style="left:1152.5px;top:673.5px" width="12" height="10" viewBox="0 0 12 10"><path d="M0.8 1.2 H4.2 L6 3.1 L7.8 1.2 H11.2 L7.9 5 L11.2 8.800 H7.8 L6 6.9 L4.2 8.800 H0.8 L4.1 5 Z" fill="#f6f6f6" stroke="#4a4a4a" stroke-width="1" stroke-linejoin="round"/></svg>
<div class="abs" style="left:998.50px;top:690.50px;width:177.50px;height:31.00px;background:#000;border:4px solid #fff;border-top-color:#9a9a9a;border-left-color:#9a9a9a;box-shadow:inset 1px 1px 0 #555;"></div>
<div class="t" style="top:697px;font-size:16.3px;left:887.20px;width:400px;text-align:center;color:#fff;letter-spacing:-0.400px;">13.86 mV</div>
<div class="g" style="left:1005.00px;top:731.00px;width:164.00px;height:26.50px;"></div>
<div class="b" style="left:1017.00px;top:734.00px;width:28.00px;height:20.00px;"></div>
<div class="t" style="top:739px;font-size:11px;left:830.60px;width:400px;text-align:center;">A</div>
<div class="b ba" style="left:1054.00px;top:734.00px;width:28.00px;height:20.00px;"></div>
<div class="t" style="top:739px;font-size:11px;left:867.60px;width:400px;text-align:center;">V</div>
<div class="b" style="left:1092.00px;top:734.00px;width:28.00px;height:20.00px;"></div>
<div class="t" style="top:739px;font-size:11px;left:905.60px;width:400px;text-align:center;">&#937;</div>
<div class="b" style="left:1129.00px;top:734.00px;width:29.00px;height:20.00px;"></div>
<div class="t" style="top:739px;font-size:11px;left:943.10px;width:400px;text-align:center;">dB</div>
<div class="g" style="left:1029.60px;top:757.00px;width:113.00px;height:26.50px;border-top:none;border-radius:0 0 3px 3px;"></div>
<div class="b ba" style="left:1039.00px;top:764.00px;width:42.00px;height:14.00px;"></div>
<svg class="abs" style="left:1039px;top:764px" width="42" height="14" viewBox="0 0 42 14"><path d="M9.500 8.500 C12 4 14.500 2.500 17 4.500 C20 7 22.500 10.500 25.500 9.500 C28 8.500 30 7 32 5.500" fill="none" stroke="#000" stroke-width="1.6"/></svg>
<div class="b" style="left:1093.00px;top:764.00px;width:40.00px;height:14.00px;"></div>
<svg class="abs" style="left:1093px;top:764px" width="40" height="14" viewBox="0 0 40 14"><path d="M9 7 H31" stroke="#000" stroke-width="2"/></svg>
<div class="t" style="top:792px;font-size:12px;left:811.60px;width:400px;text-align:center;">+</div>
<svg class="abs" style="left:1003.9px;top:805.3px" width="14" height="14"><circle cx="7" cy="7" r="5.3" fill="#e8e8e8" stroke="#a8a8a8" stroke-width="1"/><circle cx="7" cy="7" r="3" fill="#a9a9a9" stroke="#929292" stroke-width="0.8"/></svg>
<div class="b" style="left:1053.00px;top:795.00px;width:70.00px;height:17.00px;"></div>
<div class="t" style="top:798px;font-size:11px;left:887.60px;width:400px;text-align:center;letter-spacing:0.187px;">Set...</div>
<div class="abs" style="left:1162.00px;top:801.00px;width:6.00px;height:1.00px;background:#000;"></div>
<svg class="abs" style="left:1155.2px;top:805.5px" width="14" height="14"><circle cx="7" cy="7" r="5.3" fill="#e8e8e8" stroke="#a8a8a8" stroke-width="1"/><circle cx="7" cy="7" r="3" fill="#a9a9a9" stroke="#929292" stroke-width="0.8"/></svg>
<svg class="abs" style="left:1165px;top:815px" width="11" height="11"><rect x="8" y="0" width="2" height="2" fill="#b4b4b4"/><rect x="4" y="4" width="2" height="2" fill="#b4b4b4"/><rect x="8" y="4" width="2" height="2" fill="#b4b4b4"/><rect x="0" y="8" width="2" height="2" fill="#b4b4b4"/><rect x="4" y="8" width="2" height="2" fill="#b4b4b4"/><rect x="8" y="8" width="2" height="2" fill="#b4b4b4"/></svg>
</body></html>
